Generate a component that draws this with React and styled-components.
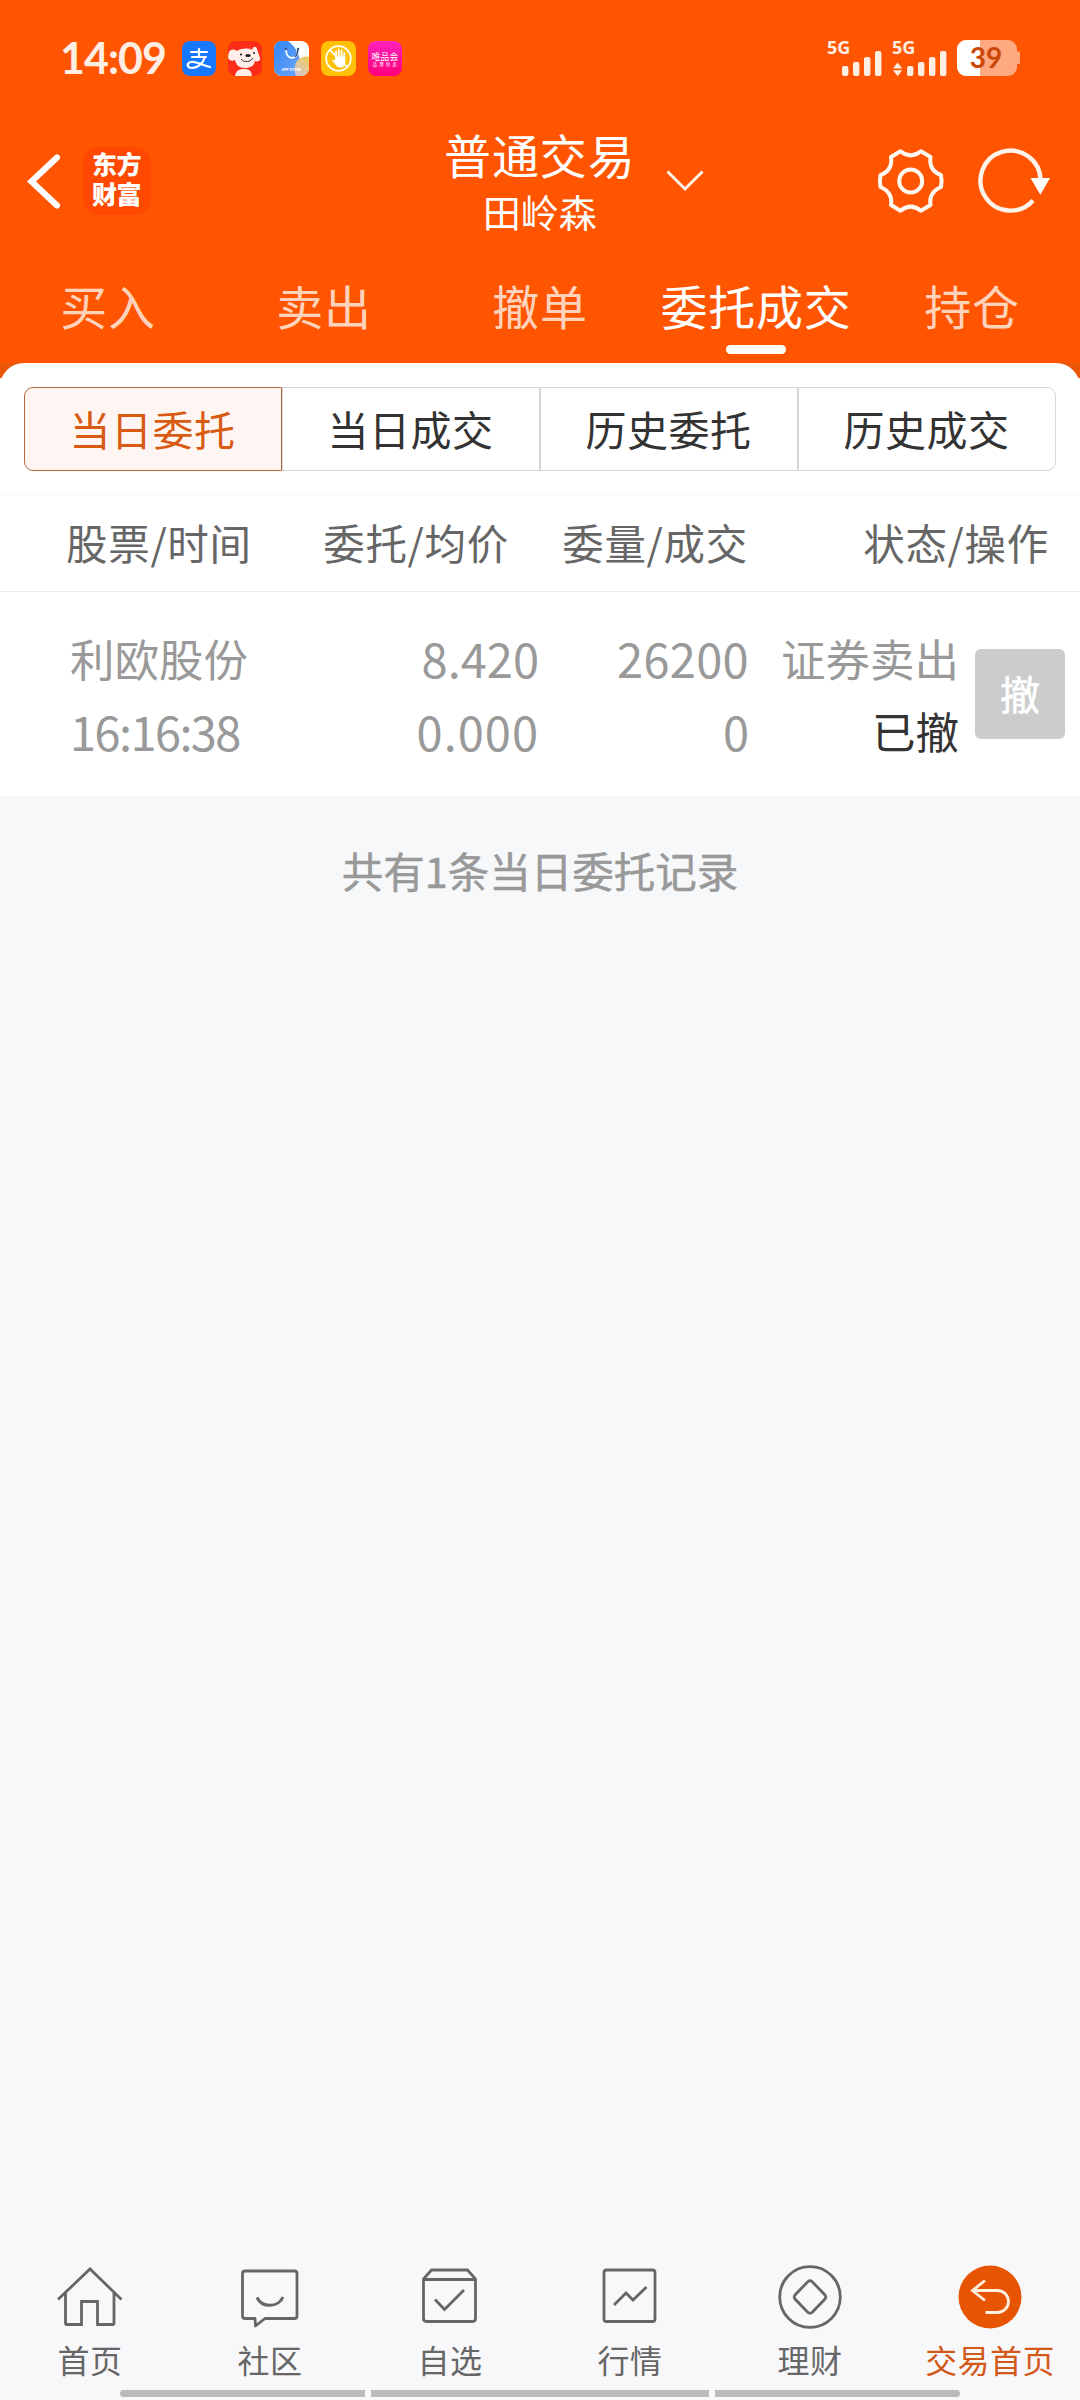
import React from "react";
import styled, { createGlobalStyle } from "styled-components";

const GlobalStyle = createGlobalStyle`
  * {
    box-sizing: border-box;
  }
  body {
    margin: 0;
    background: #f7f8fa;
    font-family: "Noto Sans CJK SC", "Noto Sans", sans-serif;
  }
`;

const Screen = styled.div`
  width: 1080px;
  height: 2400px;
  display: flex;
  flex-direction: column;
  overflow: hidden;
`;

const Header = styled.header`
  height: 363px;
  background: #ff5500;
  color: #fff;
`;

const StatusBar = styled.div`
  height: 116px;
  padding: 0 60px;
  display: flex;
  align-items: center;
  justify-content: space-between;
`;

const StatusGroup = styled.div`
  display: flex;
  align-items: center;
  gap: ${(props) => props.$gap || "0"};
`;

const Clock = styled.span`
  width: 122px;
  font-family: Lato, "Noto Sans", sans-serif;
  font-size: 43px;
  font-weight: 700;
  line-height: 50px;
  letter-spacing: -1px;
  color: #ffeee4;
`;

const AppIcons = styled.div`
  display: flex;
  gap: 12px;
`;

const TitleBar = styled.div`
  height: 138px;
  padding: 0 29px 8px 27px;
  display: grid;
  grid-template-columns: 417px 1fr 174px;
  align-items: center;
`;

const Brand = styled.div`
  display: flex;
  align-items: center;
  gap: 22px;
`;

const Logo = styled.div`
  width: 68px;
  height: 68px;
  border-radius: 16px;
  background: #ff4800;
  padding: 4px 0 0 9px;
  font-family: "Liberation Sans", "Noto Sans CJK SC", sans-serif;
  font-size: 25px;
  font-weight: 900;
  line-height: 29.5px;
  letter-spacing: -0.5px;
`;

const Account = styled.div`
  display: flex;
  align-items: center;
  gap: 30px;
`;

const AccountText = styled.div`
  display: flex;
  flex-direction: column;
  align-items: center;
`;

const AccountType = styled.div`
  font-size: 47px;
  line-height: 60px;
  letter-spacing: 0.9px;
`;

const AccountName = styled.div`
  font-size: 38px;
  line-height: 54px;
`;

const Actions = styled.div`
  display: flex;
  align-items: center;
  justify-content: space-between;
`;

const Tabs = styled.nav`
  display: grid;
  grid-template-columns: repeat(5, 216px);
`;

const Tab = styled.a`
  display: flex;
  flex-direction: column;
  align-items: center;
  gap: 10px;
  padding-top: 21px;
  font-size: 47px;
  line-height: 60px;
  letter-spacing: 0.7px;
  white-space: nowrap;
  color: ${(props) => (props.$active ? "#fff" : "#ffd3bb")};
  &::after {
    content: "";
    width: 60px;
    height: 9px;
    border-radius: 5px;
    background: ${(props) => (props.$active ? "#fff" : "transparent")};
  }
`;

const PanelBack = styled.div`
  background: linear-gradient(#e85706 15px, #fff 15px);
`;

const Panel = styled.main`
  background: #fff;
  border-radius: 24px 24px 0 0;
`;

const Segments = styled.div`
  display: grid;
  grid-template-columns: repeat(4, 258px);
  padding: 24px 24px 23px;
`;

const Segment = styled.button`
  height: 84px;
  padding: 0 1px 3px 0;
  border: 1px solid ${(props) => (props.$active ? "#b5693f" : "#d6d8d8")};
  background: ${(props) => (props.$active ? "#fff6f3" : "#fff")};
  color: ${(props) => (props.$active ? "#d95a12" : "#333")};
  font-family: inherit;
  font-size: 41px;
  letter-spacing: 0.5px;
  &:first-child {
    border-radius: 9px 0 0 9px;
  }
  &:last-child {
    border-radius: 0 9px 9px 0;
  }
`;

const TableHead = styled.div`
  height: 98px;
  display: grid;
  grid-template-columns: 220px 223px 239px 301px;
  padding: 0 30px 2px 66px;
  align-items: center;
  border-top: 1px solid #f5f5f5;
  border-bottom: 1px solid #ebebeb;
  font-size: 41.5px;
  letter-spacing: 0.7px;
  color: #666;
`;

const HeadCell = styled.div`
  text-align: ${(props) => props.$align || "right"};
  white-space: nowrap;
`;

const Order = styled.div`
  height: 204px;
  display: grid;
  grid-template-columns: 230px 239px 210px 210px 90px;
  padding: 29px 15px 0 70px;
`;

const OrderCell = styled.div`
  display: flex;
  flex-direction: column;
  align-items: ${(props) => props.$align || "flex-end"};
  font-size: 44.5px;
  line-height: 73px;
  white-space: nowrap;
  color: #999;
`;

const Num = styled.span`
  font-size: 47px;
  letter-spacing: ${(props) => props.$spacing || "0"};
`;

const State = styled.span`
  font-size: 43.5px;
  color: #333;
`;

const CancelButton = styled.button`
  width: 90px;
  height: 90px;
  margin: 28px 0 0 16px;
  padding: 0 0 3px;
  border: none;
  border-radius: 6px;
  background: #ccc;
  color: #fff;
  font-family: inherit;
  font-size: 40px;
  -webkit-text-stroke: 0.6px #fff;
`;

const Summary = styled.p`
  flex: 1;
  margin: 0;
  padding-top: 44px;
  text-align: center;
  font-size: 41.5px;
  line-height: 60px;
  color: #999;
  -webkit-text-stroke: 0.5px #999;
`;

const BottomNav = styled.nav`
  height: 146px;
  display: grid;
  grid-template-columns: repeat(6, 180px);
  background: #f8f8fa;
`;

const NavItem = styled.a`
  display: flex;
  flex-direction: column;
  align-items: center;
  padding-top: 20px;
  font-size: 32px;
  line-height: 44px;
  letter-spacing: 0.4px;
  color: ${(props) => (props.$active ? "#d2591a" : "#666")};
  svg {
    margin-bottom: 7px;
  }
`;

const GestureBar = styled.div`
  height: 10px;
  display: flex;
  justify-content: center;
  gap: 6px;
  background: #f8f8fa;
`;

const GestureSegment = styled.span`
  width: ${(props) => props.$width}px;
  height: 7px;
  background: #bbb;
  border-radius: ${(props) => props.$radius || "0"};
`;

const AlipayIcon = () => (
  <svg width="34" height="35" viewBox="0 0 34 35">
    <rect width="34" height="35" rx="8" fill="#1677ff" />
    <g fill="none" stroke="#fff" strokeWidth="2.2" strokeLinecap="round">
      <path d="M9 11h16M17 8v8M10 16h14" />
      <path d="M23 16c-2 6-7 11-13 11-5 0-6-5-1-6 6-1 12 4 19 5" />
    </g>
  </svg>
);

const DogIcon = () => (
  <svg width="34" height="35" viewBox="0 0 34 35">
    <rect width="34" height="35" rx="8" fill="#fb2c18" />
    <path
      d="M1 11c2-3 5-3 8-1 5-3 12-3 15-1 1-4 4-4 5-1l3 9c1 3-3 4-5 3-1 5-5 7-10 7-6 0-9-3-10-8-3 2-7 0-7-3z"
      fill="#ffeee9"
    />
    <path d="M7 35c1-5 3-7 9-7s7 2 8 7z" fill="#ffeee9" />
    <circle cx="13" cy="13.5" r="1.1" fill="#222" />
    <circle cx="26" cy="12" r="1" fill="#222" />
    <ellipse cx="20" cy="14.500" rx="2.800" ry="1.500" fill="#222" />
    <path d="M13 18c3 4 10 3 12-1" fill="none" stroke="#333" strokeWidth="1" />
  </svg>
);

const StoreIcon = () => (
  <svg width="35" height="35" viewBox="0 0 35 35">
    <defs>
      <clipPath id="store">
        <rect width="35" height="35" rx="8" />
      </clipPath>
      <linearGradient id="storeBlue" x1="0" y1="0" x2="1" y2="1">
        <stop offset="0" stopColor="#2e86f7" />
        <stop offset="1" stopColor="#6fa5f6" />
      </linearGradient>
      <linearGradient id="storeGold" x1="1" y1="0" x2="0.4" y2="1">
        <stop offset="0" stopColor="#eecb55" />
        <stop offset="1" stopColor="#d9c5c4" />
      </linearGradient>
    </defs>
    <g clipPath="url(#store)">
      <rect width="35" height="35" fill="#fff" />
      <path d="M0 0h14c6 4 11 12 12 20 0 6-1 10-3 15H0z" fill="url(#storeBlue)" />
      <path d="M35 16c-7-2-13 3-14 9-1 4 0 8 1 10h13z" fill="url(#storeGold)" />
      <path d="M12 8c0 5 2 9 6 9s6-4 6-9" fill="none" stroke="#fff" strokeWidth="1.8" />
      <path d="M21 16c2-2 3-4 3-8" fill="none" stroke="#35507c" strokeWidth="1.3" />
      <circle cx="12" cy="8" r="1.2" fill="#35507c" />
      <circle cx="24" cy="8" r="1.2" fill="#35507c" />
      <text x="17.5" y="30" textAnchor="middle" fontSize="3.6" fontWeight="700" fill="#fff">
        APP STORE
      </text>
    </g>
  </svg>
);

const HandIcon = () => (
  <svg width="35" height="35" viewBox="0 0 35 35">
    <rect width="35" height="35" rx="8" fill="#ffc107" />
    <circle cx="17.5" cy="17.5" r="12.3" fill="none" stroke="#fff" strokeWidth="1.7" />
    <path d="M8.800 8.800l17.400 17.400" stroke="#fff" strokeWidth="1.7" />
    <path d="M15 17v-6.500M17.800 16V9M20.600 16v-6.500M23.300 17v-5" stroke="#fff" strokeWidth="1.900" strokeLinecap="round" />
    <path d="M14 15.500h10.300V21c0 3.500-2 5.500-4.800 5.500-2.500 0-3.800-1-5-3l-3.500-4c.8-1.200 2-.8 3 .3z" fill="#fff" />
  </svg>
);

const VipIcon = () => (
  <svg width="34" height="35" viewBox="0 0 34 35">
    <defs>
      <linearGradient id="vip" x1="0" y1="0" x2="0" y2="1">
        <stop offset="0" stopColor="#fb22bd" />
        <stop offset="1" stopColor="#ff0079" />
      </linearGradient>
    </defs>
    <rect width="34" height="35" rx="8" fill="url(#vip)" />
    <g fill="#fff" textAnchor="middle" fontFamily="Liberation Sans, Noto Sans CJK SC">
      <text x="17" y="18.500" fontSize="8.800">
        唯品会
      </text>
      <text x="18" y="24.500" fontSize="4.200" letterSpacing="2.400">
        品牌特卖
      </text>
    </g>
  </svg>
);

const Signals = () => (
  <svg width="122" height="52" viewBox="825 32 122 52" fill="#ffeee4">
    {[828, 893].map((x) => (
      <g key={x}>
        <text x={x - 1} y="54" fontFamily="Noto Sans" fontSize="18" fontWeight="700">
          5G
        </text>
        <rect x={x + 14} y="66" width="6.400" height="10" rx="2" />
        <rect x={x + 25} y="62" width="6.400" height="14" rx="2" />
        <rect x={x + 36} y="57" width="6.400" height="19" rx="2" />
        <rect x={x + 47} y="51" width="6.400" height="25" rx="2" />
      </g>
    ))}
    <path d="M893 68.500l4.600-6 4.600 6zM893 70.200l4.600 6 4.600-6z" />
  </svg>
);

const Battery = () => (
  <svg width="63" height="36" viewBox="957 40 63 36">
    <defs>
      <clipPath id="battery">
        <rect x="957" y="40" width="60" height="36" rx="9" />
      </clipPath>
    </defs>
    <rect x="1016" y="51.500" width="4" height="12.500" rx="1.200" fill="#ffa980" />
    <g clipPath="url(#battery)">
      <rect x="957" y="40" width="60" height="36" fill="#ffa980" />
      <rect x="957" y="40" width="23" height="36" fill="#fff" />
    </g>
    <text x="986" y="68" textAnchor="middle" fontFamily="Lato" fontSize="28" fontWeight="700" fill="#cb4708">
      39
    </text>
  </svg>
);

const BackIcon = () => (
  <svg width="34" height="58" viewBox="26 152 34 58">
    <path d="M56 157.500L30.500 181.500 56 205.500" fill="none" stroke="#fff" strokeWidth="6.200" strokeLinecap="round" />
  </svg>
);

const ChevronIcon = () => (
  <svg width="38" height="22" viewBox="665 170 38 22">
    <path d="M666.500 171.500L684 189l17.500-17.500" fill="none" stroke="#fff3e8" strokeWidth="3" />
  </svg>
);

const GearIcon = () => (
  <svg width="68" height="68" viewBox="877 147 68 68" fill="none" stroke="#fff8f0" strokeWidth="4" strokeLinejoin="round">
    <path d="M900.500 151.300Q910.700 159.500 920.900 151.300L930.500 157Q928.500 170 941 175.200Q942.200 181 941 187Q928.500 192.500 930.500 205L920.900 210.700Q910.700 202.500 900.500 210.700L891 205Q893 192.500 880.500 187Q879.300 181 880.500 175.200Q893 170 891 157Z" />
    <circle cx="910.700" cy="181" r="11.500" />
  </svg>
);

const RefreshIcon = () => (
  <svg width="74" height="68" viewBox="977 147 74 68">
    <path d="M1040.500 180A30 30 0 1 0 1033 200.500" fill="none" stroke="#fff3ea" strokeWidth="4.400" />
    <path d="M1030.500 178h19.500l-9.700 16.800z" fill="#fff" />
  </svg>
);

// Bottom icons share a 66px box with the origin at its centre
const NavIcon = ({ children }) => (
  <svg width="66" height="66" viewBox="-33 -33 66 66" fill="none" stroke="#666" strokeWidth="2.800">
    {children}
  </svg>
);

const navItems = [
  {
    label: "首页",
    icon: (
      <path d="M-32 2.500L0-28 31.500 2.500M-24.500-4V26Q-24.500 27.500-23 27.500H-8.500V4.500H7.500V27.500H22.500Q24 27.500 24 26V-4" />
    ),
  },
  {
    label: "社区",
    icon: (
      <>
        <path d="M-25-26H24.500Q27-26 27-23.500V19Q27 21.500 24.500 21.500H-5L-14.500 29-15 21.500H-25Q-27.500 21.500-27.500 19V-23.500Q-27.500-26-25-26Z" strokeLinejoin="round" />
        <path d="M-13 .5C-8 11 8 11 13 0" strokeWidth="3" />
      </>
    ),
  },
  {
    label: "自选",
    icon: (
      <>
        <path d="M-26.500-18L-18.500-27H17.500L25.500-18V21.500Q25.500 24.500 22.500 24.500H-23.500Q-26.500 24.500-26.500 21.500ZM-26.500-17.500H25.500" />
        <path d="M-15 2.500L-5.500 12.500 14-7" />
      </>
    ),
  },
  {
    label: "行情",
    icon: (
      <>
        <rect x="-26" y="-27" width="51" height="51.500" rx="2.500" />
        <path d="M-16 8L-4-4 3 3 16.500-10" />
      </>
    ),
  },
  {
    label: "理财",
    icon: (
      <>
        <circle r="30.300" />
        <path d="M-2-15.500Q0-17 2-15.500L15-2Q16.500 0 15 2L2 15.500Q0 17-2 15.500L-15 2Q-16.500 0-15-2Z" />
      </>
    ),
  },
  {
    label: "交易首页",
    active: true,
    icon: (
      <>
        <circle r="31.500" fill="#e85502" stroke="none" />
        <path d="M-5-16.500L-17.500-6.500-5 3.500M-17-6.500H7.500A11 11 0 0 1 7.500 15.500H-4.500" stroke="#fff0e2" />
      </>
    ),
  },
];

const tabs = ["买入", "卖出", "撤单", "委托成交", "持仓"];
const segments = ["当日委托", "当日成交", "历史委托", "历史成交"];

function App() {
  return (
    <Screen>
      <GlobalStyle />
      <Header>
        <StatusBar>
          <StatusGroup>
            <Clock>14:09</Clock>
            <AppIcons>
              <AlipayIcon />
              <DogIcon />
              <StoreIcon />
              <HandIcon />
              <VipIcon />
            </AppIcons>
          </StatusGroup>
          <StatusGroup $gap="10px">
            <Signals />
            <Battery />
          </StatusGroup>
        </StatusBar>
        <TitleBar>
          <Brand>
            <BackIcon />
            <Logo>
              东方
              <br />
              财富
            </Logo>
          </Brand>
          <Account>
            <AccountText>
              <AccountType>普通交易</AccountType>
              <AccountName>田岭森</AccountName>
            </AccountText>
            <ChevronIcon />
          </Account>
          <Actions>
            <GearIcon />
            <RefreshIcon />
          </Actions>
        </TitleBar>
        <Tabs>
          {tabs.map((tab) => (
            <Tab key={tab} $active={tab === "委托成交"}>
              {tab}
            </Tab>
          ))}
        </Tabs>
      </Header>
      <PanelBack>
        <Panel>
          <Segments>
            {segments.map((segment, index) => (
              <Segment key={segment} $active={index === 0}>
                {segment}
              </Segment>
            ))}
          </Segments>
          <TableHead>
            <HeadCell $align="left">股票/时间</HeadCell>
            <HeadCell>委托/均价</HeadCell>
            <HeadCell>委量/成交</HeadCell>
            <HeadCell>状态/操作</HeadCell>
          </TableHead>
          <Order>
            <OrderCell $align="flex-start">
              <span>利欧股份</span>
              <Num $spacing="-1.6px">16:16:38</Num>
            </OrderCell>
            <OrderCell>
              <Num>8.420</Num>
              <Num $spacing="1px">0.000</Num>
            </OrderCell>
            <OrderCell>
              <Num $spacing="0.3px">26200</Num>
              <Num>0</Num>
            </OrderCell>
            <OrderCell>
              <span>证券卖出</span>
              <State>已撤</State>
            </OrderCell>
            <CancelButton>撤</CancelButton>
          </Order>
        </Panel>
      </PanelBack>
      <Summary>共有1条当日委托记录</Summary>
      <BottomNav>
        {navItems.map((item) => (
          <NavItem key={item.label} $active={item.active}>
            <NavIcon>{item.icon}</NavIcon>
            {item.label}
          </NavItem>
        ))}
      </BottomNav>
      <GestureBar>
        <GestureSegment $width={245} $radius="4px 0 0 4px" />
        <GestureSegment $width={338} />
        <GestureSegment $width={245} $radius="0 4px 4px 0" />
      </GestureBar>
    </Screen>
  );
}

export default App;
